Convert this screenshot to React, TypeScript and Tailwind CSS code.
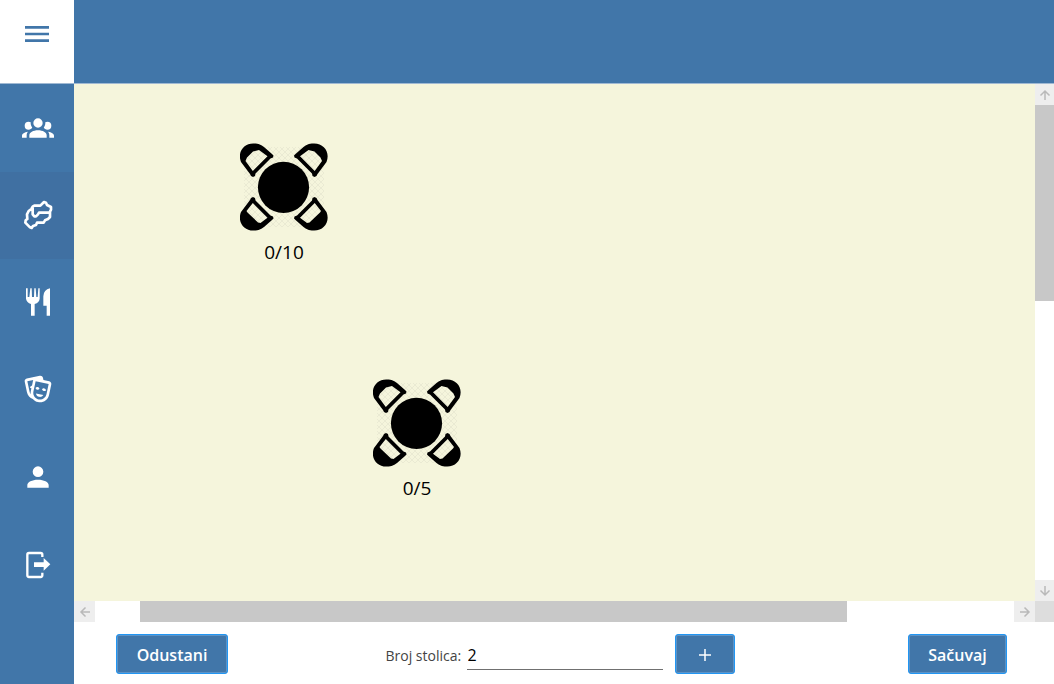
import { useState } from "react";
import type { ReactNode } from "react";

type IconProps = { children: ReactNode; viewBox?: string };

function Icon({ children, viewBox = "0 0 24 24" }: IconProps) {
  return (
    <svg viewBox={viewBox} className="size-8" fill="currentColor" aria-hidden="true">
      {children}
    </svg>
  );
}

const navItems = [
  {
    label: "Gosti",
    icon: (
      <Icon>
        <path d="M12,5.5A3.5,3.5 0 0,1 15.5,9A3.5,3.5 0 0,1 12,12.5A3.5,3.5 0 0,1 8.5,9A3.5,3.5 0 0,1 12,5.5M5,8C5.56,8 6.08,8.15 6.53,8.42C6.38,9.85 6.8,11.27 7.66,12.38C7.16,13.34 6.16,14 5,14A3,3 0 0,1 2,11A3,3 0 0,1 5,8M19,8A3,3 0 0,1 22,11A3,3 0 0,1 19,14C17.84,14 16.84,13.34 16.34,12.38C17.2,11.27 17.62,9.85 17.47,8.42C17.92,8.15 18.44,8 19,8M5.5,18.25C5.5,16.18 8.41,14.5 12,14.5C15.59,14.5 18.5,16.18 18.5,18.25V20H5.5V18.25M0,20V18.5C0,17.11 1.89,15.94 4.45,15.6C3.86,16.28 3.5,17.22 3.5,18.25V20H0M24,20H20.5V18.25C20.5,17.22 20.14,16.28 19.55,15.6C22.11,15.94 24,17.11 24,18.5V20Z" />
      </Icon>
    ),
  },
  {
    label: "Raspored",
    icon: (
      <Icon viewBox="66 99 96 96">
        <path
          d="M98 125L103 122H121L132 111L138 113L141 120L153 126V134L150 140V156L144 162L135 166L131 173H111L108 180L99 183L95 189L90 187L76 173L77 166L82 162L81 148L86 138L94 132ZM98 128V148L103 154H108L114 148L117 143L151 142"
          fill="none"
          stroke="currentColor"
          strokeWidth="8"
          strokeLinejoin="round"
        />
      </Icon>
    ),
  },
  {
    label: "Meni",
    icon: (
      <Icon viewBox="66 49 96 96">
        <path d="M78 56H83V82H88L91 56H95L96 82H102L103 56H107L109 82H113L115 56H119V87Q118 98 104 103V138H93V103Q80 99 78 87Z" />
        <path d="M150 56V138H140V108H130V80Q131 60 150 56Z" />
      </Icon>
    ),
  },
  {
    label: "Zabava",
    icon: (
      <Icon>
        <path d="M8.11,19.45C5.94,18.65 4.22,16.78 3.71,14.35L2.05,6.54C1.81,5.46 2.5,4.4 3.58,4.17L13.35,2.1L13.38,2.09C14.45,1.88 15.5,2.57 15.72,3.63L16.07,5.3L20.42,6.23H20.45C21.5,6.47 22.18,7.53 21.96,8.59L20.3,16.41C19.5,20.18 15.78,22.6 12,21.79C10.42,21.46 9.08,20.61 8.11,19.45V19.45M20,8.18L10.23,6.1L8.57,13.92V13.95C8,16.63 9.73,19.27 12.42,19.84C15.11,20.41 17.77,18.69 18.34,16L20,8.18M16,16.5C15.37,17.57 14.11,18.16 12.83,17.89C11.56,17.62 10.65,16.57 10.5,15.34L16,16.5M8.47,5.17L4,6.13L5.66,13.94L5.67,13.97C5.82,14.68 6.12,15.32 6.53,15.87C6.43,15.1 6.45,14.3 6.62,13.5L7.05,11.5C6.6,11.42 6.21,11.17 6,10.81C6.06,10.2 6.56,9.66 7.25,9.5C7.33,9.5 7.4,9.5 7.5,9.5L8.28,5.69C8.32,5.5 8.38,5.33 8.47,5.17M15.03,12.23C15.35,11.7 16.03,11.42 16.72,11.57C17.41,11.71 17.91,12.24 18,12.86C17.67,13.38 17,13.66 16.3,13.5C15.61,13.37 15.11,12.84 15.03,12.23M10.15,11.19C10.47,10.66 11.14,10.38 11.83,10.53C12.5,10.67 13.03,11.21 13.11,11.82C12.78,12.34 12.11,12.63 11.42,12.5C10.73,12.33 10.23,11.8 10.15,11.19Z" />
      </Icon>
    ),
  },
  {
    label: "Profil",
    icon: (
      <Icon>
        <path d="M12,4A4,4 0 0,1 16,8A4,4 0 0,1 12,12A4,4 0 0,1 8,8A4,4 0 0,1 12,4M12,14C16.42,14 20,15.79 20,18V20H4V18C4,15.79 7.58,14 12,14Z" />
      </Icon>
    ),
  },
  {
    label: "Odjava",
    icon: (
      <Icon viewBox="66 294 96 96">
        <path
          d="M127 321V314Q127 309 122 309H87Q82 309 82 314V376Q82 381 87 381H122Q127 381 127 376V368"
          fill="none"
          stroke="currentColor"
          strokeWidth="7"
        />
        <path d="M102 337H131V324L151 343L131 362V351H102Z" />
      </Icon>
    ),
  },
];

const tables = [
  { id: "t1", label: "0/10", place: "left-[166px] top-[59px]" },
  { id: "t2", label: "0/5", place: "left-[299px] top-[295px]" },
];

const chairBody =
  "M1 19C-3 9 4 0 14 .5C19 .5 21 2 24 4L32 11L33.5 12.5L33 14.5L30.5 15.5L15.5 30.5L15 33L13 34L11 33L10 31Z";
const upperChair = `${chairBody}M19 7L27.5 13.3L12.8 28L5.5 18L7 14.5L13 8.5Z`;
const lowerChair = `${chairBody}M20.5 8L27.5 13.3L12.8 28L6.5 20L7.5 18.5L18 8.5Z`;

function TableDrawing({ id }: { id: string }) {
  return (
    <svg viewBox="0 0 88 88" className="size-[88px]" aria-hidden="true">
      <defs>
        <pattern id={id} width="6" height="6" patternUnits="userSpaceOnUse">
          <path d="M0 0L6 6M6 0L0 6" stroke="#000" strokeOpacity=".06" strokeWidth=".8" />
        </pattern>
      </defs>
      <rect x="4" y="4" width="80" height="80" fill={`url(#${id})`} />
      <circle cx="43.5" cy="44.3" r="25.6" />
      <g fillRule="evenodd">
        <path d={upperChair} />
        <path d={upperChair} transform="matrix(-1 0 0 1 87.5 0)" />
        <path d={lowerChair} transform="matrix(1 0 0 -1 0 88)" />
        <path d={lowerChair} transform="matrix(-1 0 0 -1 87.5 88)" />
      </g>
    </svg>
  );
}

function ScrollArrow({ label, d }: { label: string; d: string }) {
  return (
    <button
      type="button"
      aria-label={label}
      className="flex min-h-[21px] min-w-[19px] items-center justify-center bg-[#eeeeee] text-[#b9b9b9]"
    >
      <svg viewBox="0 0 12 12" className="size-3" fill="none" stroke="currentColor" strokeWidth="1.5">
        <path d={d} />
      </svg>
    </button>
  );
}

const actionButton =
  "h-10 rounded-[3px] border border-[#2196f3] bg-[#4176a9] pt-0.5 text-base font-semibold text-white shadow-[inset_0_0_0_1px_#5b93c8]";

export default function App() {
  const [chairs, setChairs] = useState("2");

  return (
    <div className="flex h-screen bg-white font-['Open_Sans','Noto_Sans',sans-serif] text-black">
      <aside className="flex w-[74px] shrink-0 flex-col bg-[#4176a9] text-white">
        <button
          type="button"
          aria-label="Otvori meni"
          className="flex h-[84px] shrink-0 justify-center border-b border-[#a0b9d3] bg-white pt-[18px] text-[#4176a9]"
        >
          <Icon>
            <path d="M3,6H21V8H3V6M3,11H21V13H3V11M3,16H21V18H3V16Z" />
          </Icon>
        </button>
        <nav className="grid h-[525px] grid-rows-6">
          {navItems.map((item, index) => (
            <a
              key={item.label}
              href="#"
              aria-label={item.label}
              className={
                index === 1
                  ? "flex items-center justify-center bg-[#4070a2] pb-0.5 pl-0.5"
                  : "flex items-center justify-center pb-0.5 pl-0.5"
              }
            >
              {item.icon}
            </a>
          ))}
        </nav>
      </aside>

      <div className="flex min-w-0 flex-1 flex-col">
        <header className="h-[84px] shrink-0 border-b border-[#a0b9d3] bg-[#4176a9]" />

        <main className="flex min-h-0 flex-1 flex-col">
          <div className="flex min-h-0 flex-1">
            <div className="relative min-w-0 flex-1 overflow-hidden bg-[#f5f5dc]">
              {tables.map((table) => (
                <div key={table.id} className={`absolute flex flex-col items-center ${table.place}`}>
                  <TableDrawing id={table.id} />
                  <span className="mt-2 text-[19px] leading-[26px]">{table.label}</span>
                </div>
              ))}
            </div>
            <div className="flex w-[19px] shrink-0 flex-col">
              <ScrollArrow label="Gore" d="M6 11V2M1.5 6.5L6 2L10.5 6.5" />
              <div className="flex flex-1 flex-col">
                <div className="flex-[196] bg-[#c8c8c8]" />
                <div className="flex-[279]" />
              </div>
              <ScrollArrow label="Dole" d="M6 1V10M1.5 5.5L6 10L10.5 5.5" />
            </div>
          </div>
          <div className="flex h-[21px] shrink-0">
            <div className="flex w-[21px] flex-col">
              <ScrollArrow label="Lijevo" d="M11 6H2M6.5 1.5L2 6L6.5 10.5" />
            </div>
            <div className="flex flex-1">
              <div className="flex-[45]" />
              <div className="flex-[707] bg-[#c8c8c8]" />
              <div className="flex-[167]" />
            </div>
            <div className="flex w-[21px] flex-col">
              <ScrollArrow label="Desno" d="M1 6H10M5.5 1.5L10 6L5.5 10.5" />
            </div>
            <div className="w-[19px] bg-[#dddddd]" />
          </div>
        </main>

        <footer className="flex h-[62px] shrink-0 items-center justify-between pt-0.5 pr-[47px] pl-[42px]">
          <button type="button" className={`w-28 ${actionButton}`}>
            Odustani
          </button>
          <form className="flex items-center pr-4" onSubmit={(event) => event.preventDefault()}>
            <label htmlFor="chairs" className="w-[81px] pt-1 text-sm whitespace-nowrap text-[#444444]">
              Broj stolica:
            </label>
            <input
              id="chairs"
              value={chairs}
              onChange={(event) => setChairs(event.target.value)}
              className="mr-3 h-[31px] w-[196px] border-b border-[#707070] pt-0.5 pl-px text-base outline-none"
            />
            <button type="submit" aria-label="Dodaj sto" className={`flex w-[60px] items-center justify-center ${actionButton}`}>
              <svg viewBox="0 0 12 12" className="size-3" stroke="currentColor" strokeWidth="1.5">
                <path d="M6 0V12M0 6H12" />
              </svg>
            </button>
          </form>
          <button type="button" className={`w-[99px] ${actionButton}`}>
            Sačuvaj
          </button>
        </footer>
      </div>
    </div>
  );
}
